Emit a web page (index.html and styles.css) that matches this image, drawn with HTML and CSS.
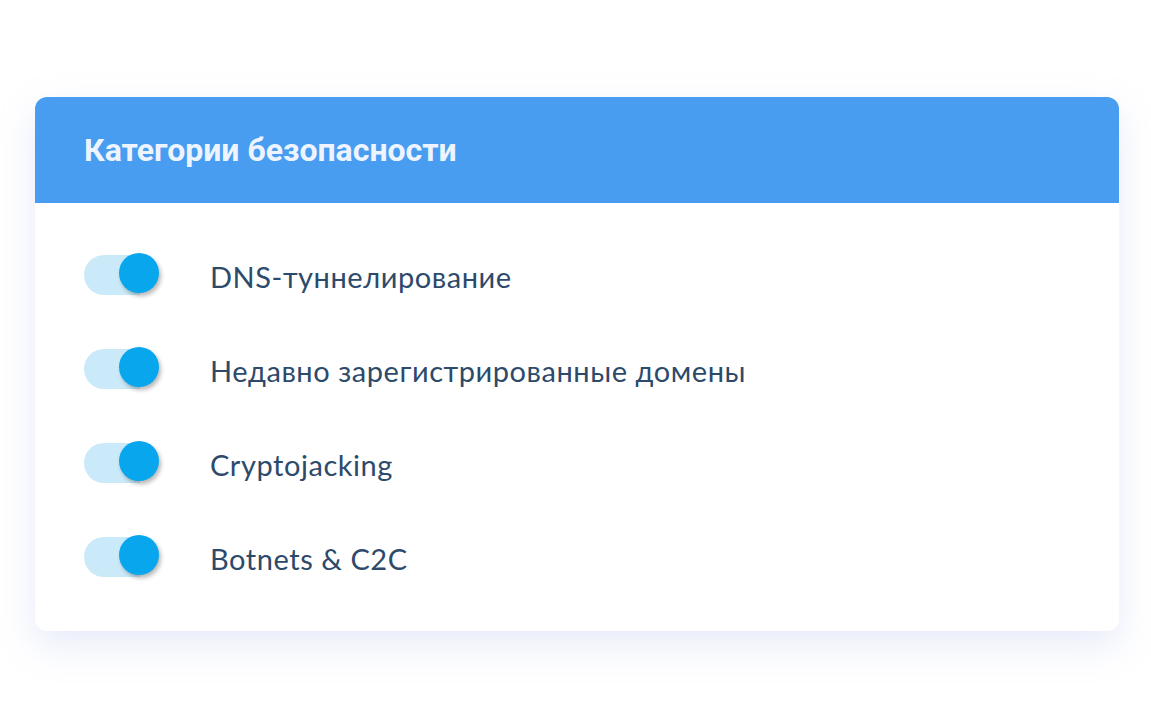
FILE: index.html
```html
<!DOCTYPE html>
<html lang="ru">
<head>
<meta charset="utf-8">
<link rel="stylesheet" href="styles.css">
</head>
<body>
<div class="page">
  <section class="card">
    <header class="card-head">
      <h1 class="card-title">Категории безопасности</h1>
    </header>
    <ul class="list">
      <li class="row"><span class="toggle"><span class="knob"></span></span><span class="label">DNS-туннелирование</span></li>
      <li class="row"><span class="toggle"><span class="knob"></span></span><span class="label">Недавно зарегистрированные домены</span></li>
      <li class="row"><span class="toggle"><span class="knob"></span></span><span class="label">Cryptojacking</span></li>
      <li class="row"><span class="toggle"><span class="knob"></span></span><span class="label">Botnets &amp; C2C</span></li>
    </ul>
  </section>
</div>
</body>
</html>
```
FILE: styles.css
```css
html, body {
  margin: 0;
  padding: 0;
  background: #ffffff;
}
.page {
  width: 1151px;
  height: 727px;
  padding: 97px 32px 0 35px;
  box-sizing: border-box;
}
.card {
  width: 1084px;
  height: 534px;
  background: #ffffff;
  border-radius: 12px;
  box-shadow: 0 14px 36px rgba(170, 182, 230, 0.28);
  overflow: hidden;
}
.card-head {
  height: 106px;
  background: #489df1;
  display: flex;
  align-items: center;
  padding: 0 0 0 49px;
}
.card-title {
  margin: 0;
  font-family: Roboto, "Liberation Sans", sans-serif;
  font-weight: 700;
  font-size: 32px;
  color: #eef4ff;
  letter-spacing: 0;
}
.list {
  list-style: none;
  margin: 0;
  padding: 50px 0 0 49px;
  display: flex;
  flex-direction: column;
  gap: 54px;
}
.row {
  display: flex;
  align-items: center;
  height: 40px;
}
.toggle {
  position: relative;
  width: 56px;
  height: 40px;
  border-radius: 20px 0 0 20px;
  background: #cbeaf9;
  margin-top: 4px;
  flex: none;
}
.knob {
  position: absolute;
  left: 35px;
  top: -2px;
  width: 40px;
  height: 40px;
  border-radius: 50%;
  background: #08a6ec;
  box-shadow: 2px 3px 4px rgba(0, 0, 0, 0.28);
}
.label {
  margin: 7px 0 0 70px;
  font-family: Lato, "Open Sans", sans-serif;
  font-size: 29px;
  letter-spacing: 0.55px;
  color: #2d4a6b;
  line-height: 40px;
}
```
